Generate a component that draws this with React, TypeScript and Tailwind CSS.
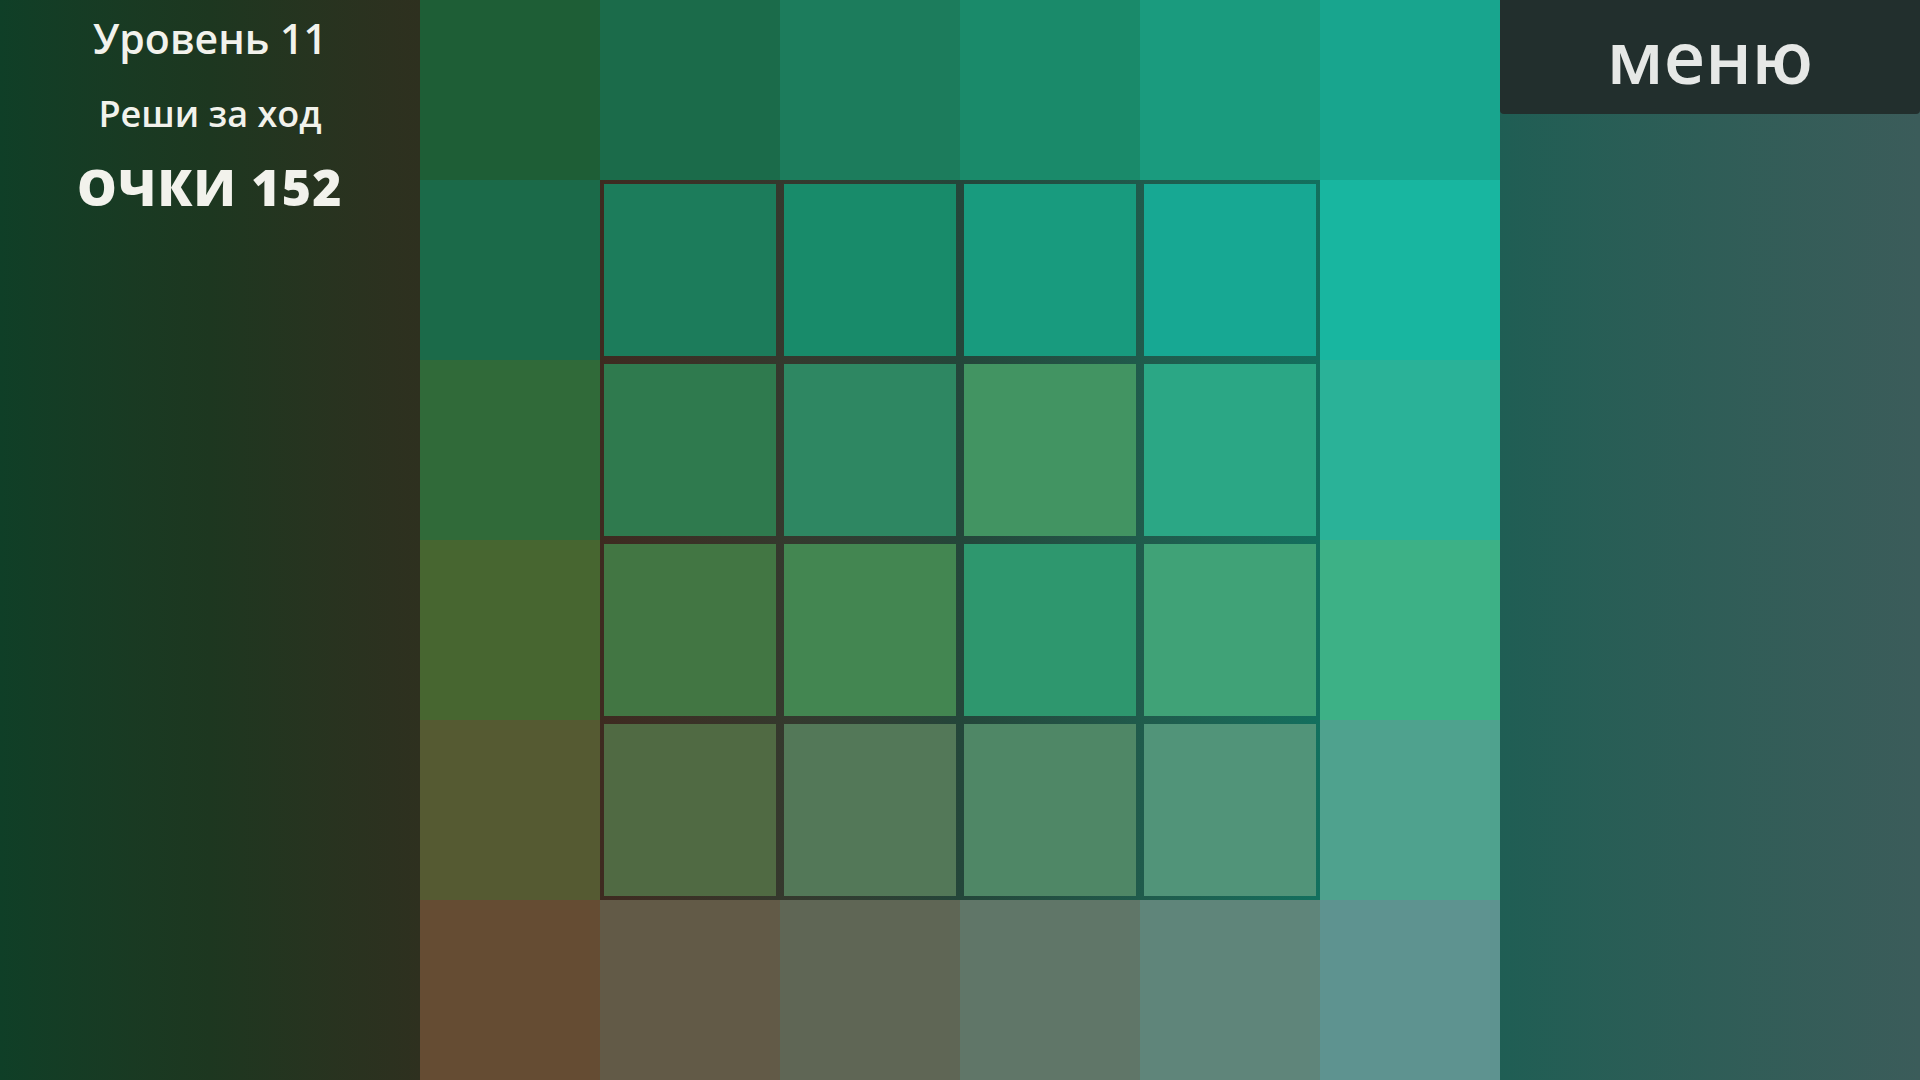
import React from "react";

const board: string[][] = [
  ["#1e5e36", "#1b6b4a", "#1c7c5c", "#1a8a6a", "#1a9b7e", "#18a58e"],
  ["#1b6a49", "#1c7c5b", "#188b6a", "#189b7e", "#17a893", "#18b6a0"],
  ["#306a39", "#2f7a4e", "#2e8762", "#429462", "#2ba785", "#2ab298"],
  ["#476630", "#427643", "#438651", "#2e976e", "#40a277", "#3db186"],
  ["#555a32", "#506a43", "#537858", "#4f8766", "#519479", "#4fa28e"],
  ["#654c33", "#625a47", "#5f6655", "#607668", "#5f857a", "#5e9390"],
];

// the 4x4 middle part is the playable field
const isInner = (r: number, c: number) => r >= 1 && r <= 4 && c >= 1 && c <= 4;

export default function App() {
  const outer: { r: number; c: number; color: string }[] = [];
  const inner: { r: number; c: number; color: string }[] = [];
  board.forEach((row, r) =>
    row.forEach((color, c) => {
      if (isInner(r, c)) inner.push({ r, c, color });
      else outer.push({ r, c, color });
    })
  );

  return (
    <div
      className="flex h-[1080px] w-[1920px] overflow-hidden"
      style={{ fontFamily: '"Open Sans", "Noto Sans", sans-serif' }}
    >
      {/* Left panel */}
      <aside className="flex w-[420px] shrink-0 flex-col items-center bg-gradient-to-r from-[#0f3f27] via-[#1d3720] to-[#2e301f] pt-[14px] text-[#f2f2ec]">
        <p className="text-[41px] font-semibold leading-[48px]">Уровень 11</p>
        <p className="mt-[30px] text-[36px] font-semibold leading-[44px]">Реши за ход</p>
        <p className="mt-[21px] text-[50px] font-extrabold leading-[60px] tracking-wide">ОЧКИ 152</p>
      </aside>

      {/* Board */}
      <main className="grid w-[1080px] shrink-0 grid-cols-6 grid-rows-6">
        <div className="col-span-4 col-start-2 row-span-4 row-start-2 grid grid-cols-4 grid-rows-4 gap-[8px] bg-gradient-to-r from-[#3e2a20] via-[#24463a] to-[#12705e] p-[4px]">
          {inner.map((cell) => (
            <div key={`${cell.r}-${cell.c}`} style={{ backgroundColor: cell.color }} />
          ))}
        </div>
        {outer.map((cell) => (
          <div key={`${cell.r}-${cell.c}`} style={{ backgroundColor: cell.color }} />
        ))}
      </main>

      {/* Right panel */}
      <aside className="flex w-[420px] shrink-0 flex-col bg-gradient-to-r from-[#1f5e54] to-[#3b5c5a]">
        <button className="flex h-[114px] w-full items-center justify-center rounded-b-[4px] bg-[#222f2d] text-[72px] font-semibold leading-none text-[#e6e8e6]">
          <span className="-mt-[3px]">меню</span>
        </button>
      </aside>
    </div>
  );
}
